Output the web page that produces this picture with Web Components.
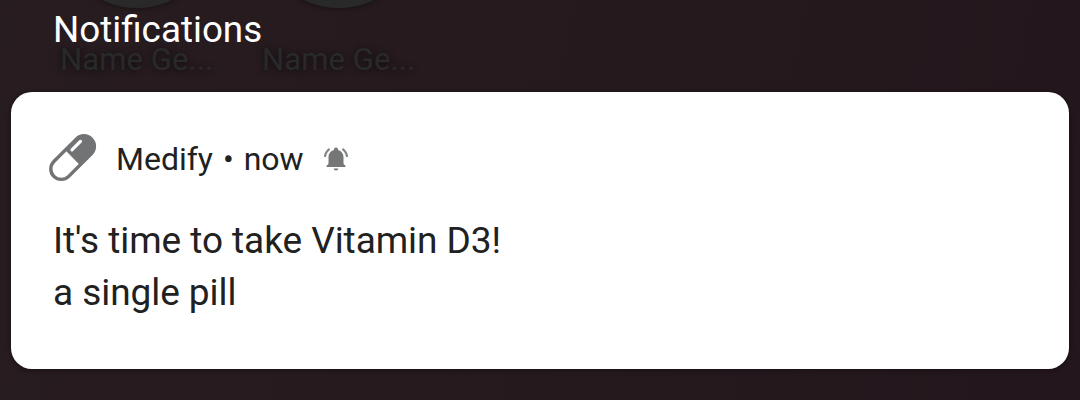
<!DOCTYPE html>
<html lang="en">
<head>
<meta charset="utf-8">
<title>Notifications</title>
<style>
html,body{margin:0;padding:0}
body{width:1080px;height:400px;overflow:hidden;font-family:Roboto,sans-serif;background:#261b1f}
</style>
</head>
<body>
<notification-shade>
  <app-shortcut slot="apps" style="left:60px">Name Ge...</app-shortcut>
  <app-shortcut slot="apps" style="left:262px">Name Ge...</app-shortcut>
  <span slot="heading">Notifications</span>
  <notification-card>
    <span slot="app">Medify • now</span>
    <span slot="title">It's time to take Vitamin D3!</span>
    <span slot="body">a single pill</span>
  </notification-card>
</notification-shade>
<script>
const define = (name, html) => customElements.define(name, class extends HTMLElement {
  constructor() {
    super();
    this.attachShadow({mode: 'open'}).innerHTML = html;
  }
});

define('app-shortcut', `
<style>
:host{position:absolute;top:0;width:152px;height:90px;font-size:31px;line-height:36px;color:#292929}
.disc{position:absolute;left:-3px;top:-152px;width:160px;height:160px;border-radius:50%;background:#292929;box-shadow:0 1px 5px rgba(0,0,0,.35)}
.name{position:absolute;top:42px;left:0;white-space:nowrap;letter-spacing:.1px;text-shadow:0 1px 7px rgba(0,0,0,.6)}
</style>
<div class="disc"></div><div class="name"><slot></slot></div>`);

define('pill-icon', `
<style>:host{display:block;width:48px;height:48px}svg{display:block}</style>
<svg width="48" height="48" viewBox="0 0 48 48">
  <g transform="translate(23.6 23.6) rotate(-45)">
    <rect x="-26.5" y="-10.5" width="53" height="21" rx="10.5" fill="none" stroke="#727374" stroke-width="3.4"/>
    <path d="M0 -11H15.5A11 11 0 0 1 15.5 11H0Z" fill="#727374"/>
    <path d="M5 -5.900H17" stroke="#fff" stroke-width="3.200" stroke-linecap="round"/>
  </g>
</svg>`);

define('bell-icon', `
<style>:host{display:block;width:26px;height:26px}svg{display:block}</style>
<svg width="26" height="26" viewBox="0 0 26 26" fill="#757677">
  <path d="M13 1.500c1.200 0 2 .8 2 2v.5c3.500.9 5.500 3.800 5.500 7.400v6.700l2 1.700v1.200H3.500v-1.200l2-1.700v-6.700C5.500 7.800 7.500 4.900 11 4v-.5c0-1.200.8-2 2-2Z"/>
  <path d="M10.700 22.500h4.600a2.300 2 0 0 1-4.600 0Z"/>
  <path d="M6.600 2.900Q2.600 5.800 1.900 10.800M19.400 2.900Q23.400 5.800 24.100 10.800" fill="none" stroke="#858687" stroke-width="2.200"/>
</svg>`);

define('notification-card', `
<style>
:host{display:block;box-sizing:border-box;height:277px;padding:42px 42px 0 38px;border-radius:21px;background:#fff;color:#212121;box-shadow:0 1px 5px rgba(0,0,0,.4)}
header{display:flex;align-items:center;height:48px;font-size:32px;line-height:48px}
.app{padding-top:2px;margin:0 19px 0 19px;white-space:nowrap;word-spacing:2px}
bell-icon{margin-top:2px}
.text{padding:33px 0 0 4px;font-size:37px;line-height:52px;letter-spacing:-.06px}
.text div{white-space:nowrap}
</style>
<header><pill-icon></pill-icon><div class="app"><slot name="app"></slot></div><bell-icon></bell-icon></header>
<div class="text"><div><slot name="title"></slot></div><div><slot name="body"></slot></div></div>`);

define('notification-shade', `
<style>
:host{display:block;position:relative;box-sizing:border-box;height:400px;padding:0 11px;overflow:hidden;background:linear-gradient(100deg,#271c20,#25191e 60%,#23161c)}
h1{position:relative;z-index:1;height:84px;margin:0;padding:8px 0 0 42px;box-sizing:border-box;font-size:36.8px;line-height:44px;font-weight:400;color:#fff}
.cards{position:relative;padding-top:8px}
</style>
<slot name="apps"></slot>
<h1><slot name="heading"></slot></h1>
<div class="cards"><slot></slot></div>`);
</script>
</body>
</html>
